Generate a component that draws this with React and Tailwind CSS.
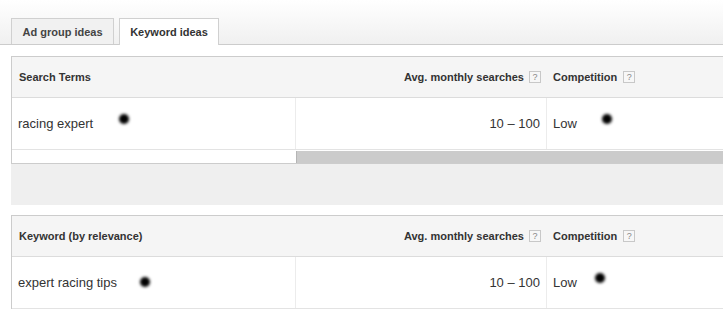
import React from "react";

function Help() {
  return (
    <span className="inline-flex items-center justify-center w-[12px] h-[12px] border border-[#c8c8c8] bg-[#f7f7f7] text-[#888] text-[9px] leading-none font-normal">
      ?
    </span>
  );
}

function Dot({ className }) {
  return <span className={"absolute w-[10px] h-[10px] rounded-full bg-black blur-[1.4px] " + className} />;
}

function Header({ first }) {
  return (
    <div className="flex h-[41px] bg-[#f5f5f5] border-b border-[#dcdcdc] text-[11px] font-bold text-[#333]">
      <div className="w-[284px] shrink-0 flex items-center pl-[7px]">{first}</div>
      <div className="w-[251px] shrink-0 flex items-center justify-end gap-[5px] pr-[6px]">
        <span>Avg. monthly searches</span>
        <Help />
      </div>
      <div className="flex-1 flex items-center gap-[6px] pl-[6px]">
        <span>Competition</span>
        <Help />
      </div>
    </div>
  );
}

function Row({ term, dot1, dot2 }) {
  return (
    <div className="flex h-[52px] border-b border-[#e3e3e3] text-[13px] text-[#333]">
      <div className="relative w-[284px] shrink-0 flex items-center pl-[6px] border-r border-[#ececec]">
        {term}
        <Dot className={dot1} />
      </div>
      <div className="w-[251px] shrink-0 flex items-center justify-end pr-[6px] border-r border-[#ececec]">
        10 – 100
      </div>
      <div className="relative flex-1 flex items-center pl-[6px]">
        Low
        <Dot className={dot2} />
      </div>
    </div>
  );
}

export default function App() {
  return (
    <div
      className="w-[723px] h-[312px] overflow-hidden bg-white"
      style={{ fontFamily: '"Liberation Sans", Arial, sans-serif' }}
    >
      <div className="h-[45px] bg-gradient-to-b from-white to-[#f0f0f0] border-b border-[#cccccc] flex items-end pl-[11px] gap-[5px]">
        <div className="w-[103px] h-[26px] border border-b-0 border-[#d0d0d0] bg-[#f1f1f1] flex items-center justify-center text-[11px] font-bold text-[#444] pt-px">
          Ad group ideas
        </div>
        <div className="w-[100px] h-[27px] -mb-px border border-b-0 border-[#d0d0d0] bg-white flex items-center justify-center text-[11px] font-bold text-[#333]">
          Keyword ideas
        </div>
      </div>

      <div className="ml-[11px] mt-[11px]">
        <div className="border-l border-t border-b border-[#cccccc]">
          <Header first="Search Terms" />
          <Row term="racing expert" dot1="left-[107px] top-[16px]" dot2="left-[55px] top-[16px]" />
          <div className="flex h-[13px] pt-px">
            <div className="w-[284px] shrink-0" />
            <div className="flex-1 h-[12px] bg-[#cbcbcb] border-l border-[#b5b5b5]" />
          </div>
        </div>
        <div className="h-[41px] bg-[#efefef]" />
        <div className="mt-[10px] border-l border-t border-[#cccccc]">
          <Header first="Keyword (by relevance)" />
          <Row term="expert racing tips" dot1="left-[128px] top-[20px]" dot2="left-[48px] top-[16px]" />
        </div>
      </div>
    </div>
  );
}
